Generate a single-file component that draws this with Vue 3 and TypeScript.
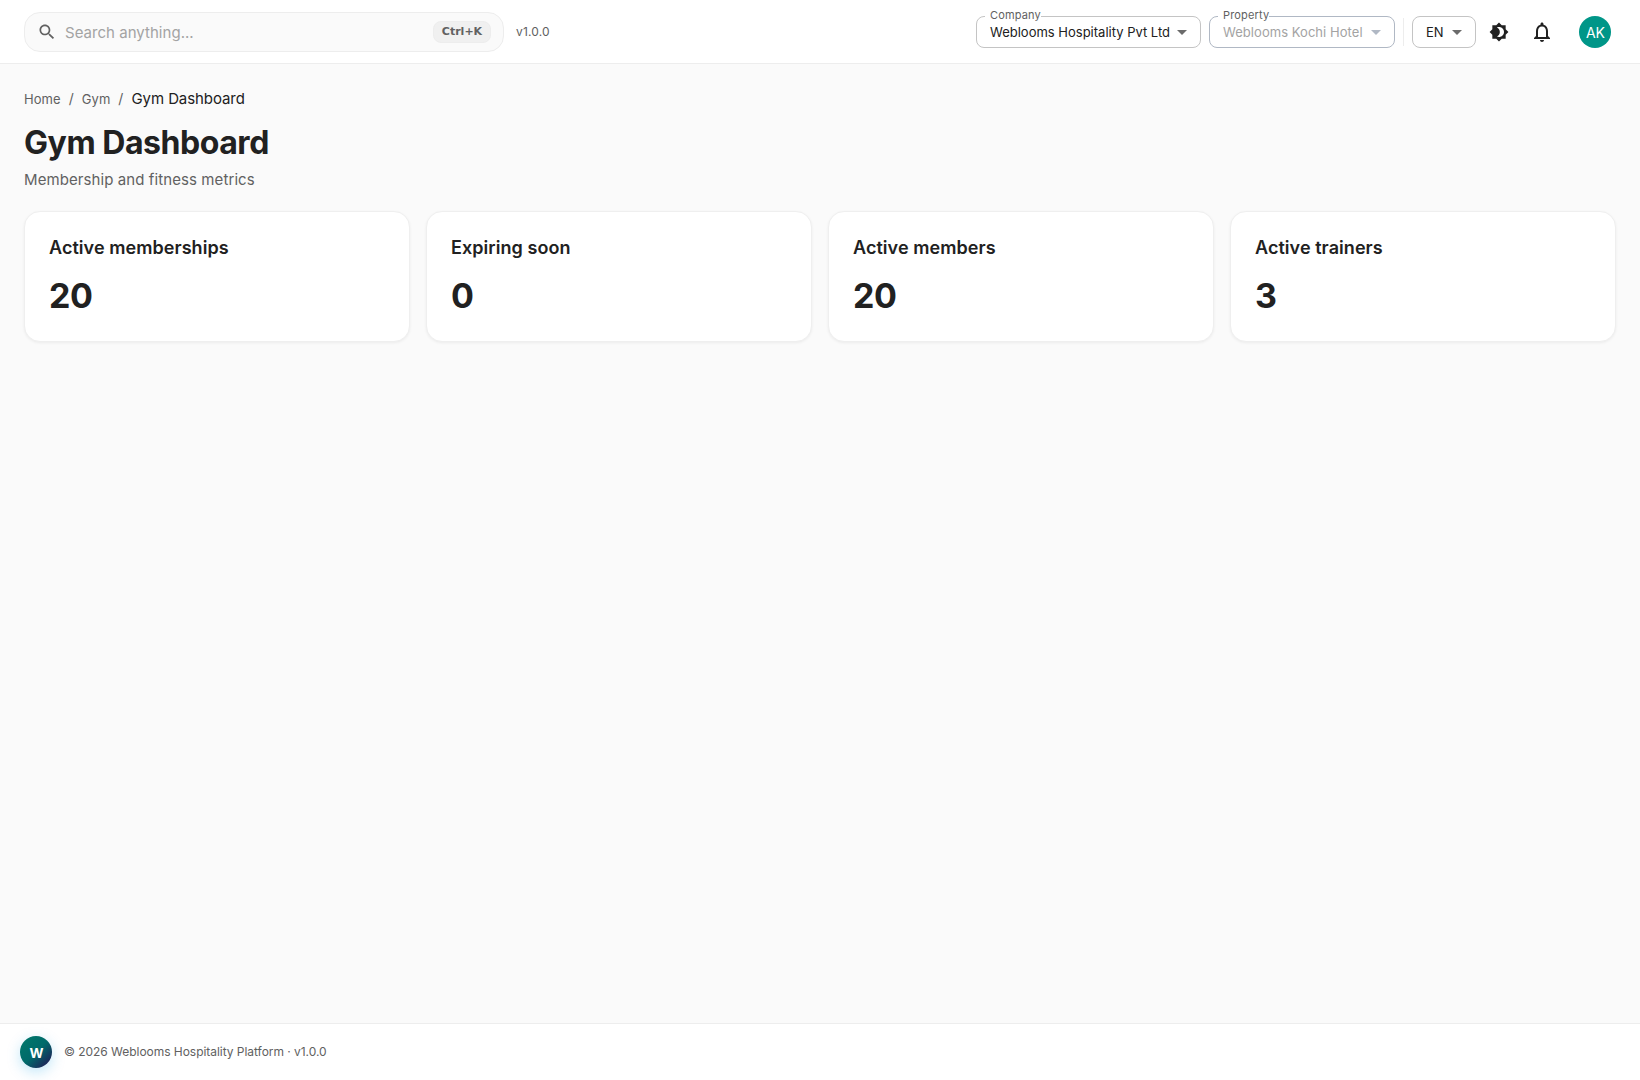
<script setup lang="ts">
interface Stat { label: string; value: number }

const stats: Stat[] = [
  { label: 'Active memberships', value: 20 },
  { label: 'Expiring soon', value: 0 },
  { label: 'Active members', value: 20 },
  { label: 'Active trainers', value: 3 },
]
</script>

<template>
  <div class="page">
    <header class="topbar">
      <div class="search">
        <svg class="search-icon" viewBox="0 0 24 24"><path d="M15.5 14h-.79l-.28-.27C15.41 12.59 16 11.11 16 9.5 16 5.91 13.09 3 9.5 3S3 5.91 3 9.5 5.91 16 9.5 16c1.61 0 3.09-.59 4.23-1.57l.27.28v.79l5 4.99L20.49 19zm-6 0C7.01 14 5 11.99 5 9.5S7.01 5 9.5 5 14 7.01 14 9.5 11.99 14 9.5 14" /></svg>
        <span class="placeholder">Search anything...</span>
        <span class="kbd">Ctrl+K</span>
      </div>
      <span class="version">v1.0.0</span>
      <div class="controls">
        <div class="select company">
          <span class="legend">Company</span>
          <span class="value">Weblooms Hospitality Pvt Ltd</span>
          <svg class="arrow" viewBox="0 0 24 24"><path d="m7 10 5 5 5-5z" /></svg>
        </div>
        <div class="select property">
          <span class="legend">Property</span>
          <span class="value">Weblooms Kochi Hotel</span>
          <svg class="arrow" viewBox="0 0 24 24"><path d="m7 10 5 5 5-5z" /></svg>
        </div>
        <div class="divider"></div>
        <div class="select lang">
          <span class="value">EN</span>
          <svg class="arrow" viewBox="0 0 24 24"><path d="m7 10 5 5 5-5z" /></svg>
        </div>
        <button class="icon-btn theme" aria-label="Theme">
          <svg width="20" height="20" viewBox="0 0 24 24"><path d="M20 8.69V4h-4.69L12 .69 8.69 4H4v4.69L.69 12 4 15.31V20h4.69L12 23.31 15.31 20H20v-4.69L23.31 12zM12 18c-.89 0-1.74-.2-2.5-.55C11.56 16.5 13 14.42 13 12s-1.44-4.5-3.5-5.45C10.26 6.2 11.11 6 12 6c3.31 0 6 2.69 6 6s-2.69 6-6 6" /></svg>
        </button>
        <button class="icon-btn bell" aria-label="Notifications">
          <svg width="24" height="24" viewBox="0 0 24 24"><path d="M12 22c1.1 0 2-.9 2-2h-4c0 1.1.9 2 2 2m6-6v-5c0-3.07-1.63-5.64-4.5-6.32V4c0-.83-.67-1.5-1.5-1.5s-1.5.67-1.5 1.5v.68C7.64 5.36 6 7.92 6 11v5l-2 2v1h16v-1zm-2 1H8v-6c0-2.48 1.51-4.5 4-4.5s4 2.02 4 4.5z" /></svg>
        </button>
        <div class="avatar">AK</div>
      </div>
    </header>

    <main class="content">
      <nav class="crumbs">
        <span>Home</span><i>/</i><span>Gym</span><i>/</i><span class="current">Gym Dashboard</span>
      </nav>
      <h1>Gym Dashboard</h1>
      <p class="subtitle">Membership and fitness metrics</p>
      <section class="cards">
        <article v-for="s in stats" :key="s.label" class="card">
          <h2>{{ s.label }}</h2>
          <div class="number">{{ s.value }}</div>
        </article>
      </section>
    </main>

    <footer class="footer">
      <div class="logo">W</div>
      <span class="copyright">© 2026 Weblooms Hospitality Platform · v1.0.0</span>
    </footer>
  </div>
</template>

<style>
body { margin: 0; }
</style>

<style scoped>
* { box-sizing: border-box; }
.page {
  height: 1080px;
  display: flex;
  flex-direction: column;
  background: #fafafa;
  color: #212121;
  font-family: Inter, "Liberation Sans", sans-serif;
}
svg { display: block; fill: currentColor; flex: none; }
.topbar {
  height: 64px;
  flex: none;
  display: flex;
  align-items: center;
  padding: 0 29px 0 24px;
  background: #fff;
  border-bottom: 1px solid #ededed;
}
.search {
  width: 480px;
  height: 40px;
  margin-top: 1px;
  display: flex;
  align-items: center;
  padding: 0 12px;
  background: #fafafa;
  border: 1px solid #ededed;
  border-radius: 16px;
}
.search-icon { width: 20px; height: 20px; color: #616161; margin-right: 8px; }
.placeholder { flex: 1; font-size: 15px; letter-spacing: 0.03px; color: #a3a3a3; line-height: 20px; padding-top: 1px; }
.kbd {
  width: 58px;
  height: 22px;
  display: flex;
  align-items: center;
  justify-content: center;
  background: #f0f0f0;
  border: 1px solid #ededed;
  border-radius: 8px;
  font: 700 11px/20px "DejaVu Sans", sans-serif;
  color: #616161;
}
.version { margin-left: 12px; font-size: 12px; letter-spacing: 0.15px; color: #616161; }
.controls { margin-left: auto; display: flex; align-items: center; margin-top: 1px; }
.select {
  position: relative;
  height: 32px;
  display: flex;
  align-items: center;
  justify-content: space-between;
  padding: 0 6px 0 13px;
  border: 1px solid #c4c4c4;
  border-radius: 8px;
  font-size: 13px;
}
.company { width: 225px; }
.property { width: 186px; margin-left: 8px; border-color: #b0b8c4; color: #a3a3a3; }
.property .value { letter-spacing: 0.05px; }
.lang { width: 64px; margin-left: 8px; }
.legend {
  position: absolute;
  left: 8px;
  top: -9px;
  padding: 0 0 0 5px;
  background: #fff;
  font-size: 11px;
  line-height: 14px;
  letter-spacing: 0.15px;
  color: #616161;
}
.arrow { width: 24px; height: 24px; color: #6b6b6b; }
.property .arrow { color: #b0b8c4; }
.divider { width: 1px; height: 28px; margin-left: 8px; background: #ededed; }
.icon-btn {
  display: flex;
  align-items: center;
  justify-content: center;
  border: 0;
  padding: 0;
  background: none;
  color: #212121;
}
.theme { width: 36px; height: 36px; margin-left: 5px; }
.bell { width: 40px; height: 40px; margin-left: 5px; }
.avatar {
  width: 32px;
  height: 32px;
  margin-left: 17px;
  display: flex;
  align-items: center;
  justify-content: center;
  border-radius: 50%;
  background: #009688;
  color: #fff;
  font-size: 14px;
  padding-left: 1px;
}
.content { flex: 1; padding: 24px 24px 0; }
.crumbs { display: flex; align-items: center; font-size: 13px; line-height: 22px; color: #616161; letter-spacing: 0.06px; }
.crumbs i { font-style: normal; margin: 0 8px; font-size: 14px; }
.crumbs .current { font-size: 15px; color: #212121; letter-spacing: -0.08px; }
h1 { margin: 13px 0 0; font-size: 32px; line-height: 40px; font-weight: 700; letter-spacing: -0.45px; }
.subtitle { margin: 6px 0 0; font-size: 15px; line-height: 22px; letter-spacing: 0.09px; color: #616161; }
.cards { margin-top: 20px; display: grid; grid-template-columns: repeat(4, 1fr); gap: 16px; }
.card {
  height: 131px;
  padding: 23px 24px;
  background: #fff;
  border: 1px solid #efefef;
  border-radius: 16px;
  box-shadow: 0 1px 3px rgba(0, 0, 0, 0.06);
}
h2 { margin: 0; font-size: 18px; line-height: 25px; font-weight: 600; letter-spacing: 0.06px; }
.number { margin-top: 15px; font-size: 34px; line-height: 42px; font-weight: 700; letter-spacing: -0.4px; }
.footer {
  height: 57px;
  flex: none;
  display: flex;
  align-items: center;
  gap: 12px;
  padding: 0 20px;
  background: #fff;
  border-top: 1px solid #ededed;
  font-size: 12px;
  color: #616161;
}
.copyright { letter-spacing: -0.04px; padding-bottom: 2px; }
.logo {
  width: 32px;
  height: 32px;
  display: flex;
  align-items: center;
  justify-content: center;
  padding: 1px 0 0 1px;
  border-radius: 50%;
  background: linear-gradient(135deg, #00796b 0%, #006a6a 50%, #1a2a5a 85%);
  box-shadow: 0 4px 14px rgba(3, 155, 229, 0.25);
  color: #fff;
  font-size: 13.5px;
  font-weight: 700;
}
</style>
